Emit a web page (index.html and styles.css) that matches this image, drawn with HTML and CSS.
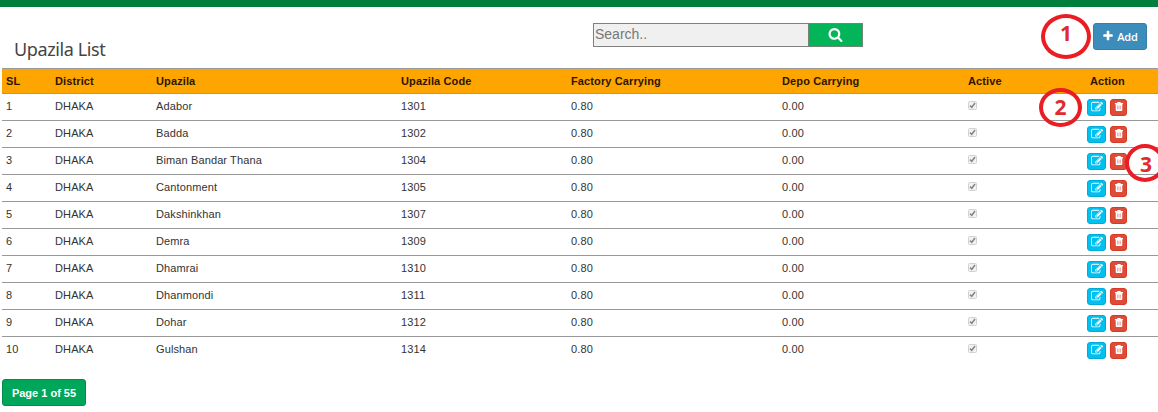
FILE: index.html
```html
<!DOCTYPE html>
<html lang="en">
<head>
<meta charset="utf-8">
<title>Upazila List</title>
<link rel="stylesheet" href="styles.css">
</head>
<body>
<svg class="sprite" aria-hidden="true">
  <symbol id="search" viewBox="0 0 1792 1792"><path d="M1216 832q0-185-131.5-316.5t-316.5-131.5-316.5 131.5-131.5 316.5 131.5 316.5 316.5 131.5 316.5-131.5 131.5-316.5zm512 832q0 52-38 90t-90 38q-54 0-90-38l-343-342q-179 124-399 124-143 0-273.5-55.5t-225-150-150-225-55.5-273.5 55.500-273.500 150-225 225-150 273.500-55.500 273.500 55.500 225 150 150 225 55.500 273.500q0 220-124 399l343 343q37 37 37 90z"/></symbol>
  <symbol id="plus" viewBox="0 0 1792 1792"><path d="M1600 736v192q0 40-28 68t-68 28h-416v416q0 40-28 68t-68 28h-192q-40 0-68-28t-28-68v-416h-416q-40 0-68-28t-28-68v-192q0-40 28-68t68-28h416v-416q0-40 28-68t68-28h192q40 0 68 28t28 68v416h416q40 0 68 28t28 68z"/></symbol>
  <symbol id="edit" viewBox="0 0 1792 1792"><path d="M888 1184l116-116-152-152-116 116v56h96v96h56zm440-720q-16-16-33 1l-350 350q-17 17-1 33t33-1l350-350q17-17 1-33zm80 594v190q0 119-84.5 203.5t-203.5 84.5h-832q-119 0-203.5-84.5t-84.5-203.5v-832q0-119 84.5-203.5t203.5-84.5h832q63 0 117 25 15 7 18 23 3 17-9 29l-49 49q-14 14-32 8-23-6-45-6h-832q-66 0-113 47t-47 113v832q0 66 47 113t113 47h832q66 0 113-47t47-113v-126q0-13 9-22l64-64q15-15 35-7t20 29zm-96-738l288 288-672 672h-288v-288zm444 132l-92 92-288-288 92-92q28-28 68-28t68 28l152 152q28 28 28 68t-28 68z"/></symbol>
  <symbol id="trash" viewBox="0 0 9 10"><path fill-rule="evenodd" d="M3 0h3l.7 1H9v1.400H0V1h2.300zM.8 2.400h7.400V9q0 1-1 1H1.800q-1 0-1-1zM2.900 4v4.500h.5V4zM4.250 4v4.500h.5V4zM5.600 4v4.500h.5V4z"/></symbol>
  <symbol id="check" viewBox="0 0 9 9"><rect x=".5" y=".5" width="8" height="8" rx="1" fill="#f1f1f1" stroke="#d2d2d2"/><path d="M2 4.600l1.800 1.700 3.200-4.300" fill="none" stroke="#858585" stroke-width="1.500"/></symbol>
</svg>
<div class="topbar"></div>
<header class="toolbar">
  <h1 class="title">Upazila List</h1>
  <form class="search">
    <input class="search-input" type="text" placeholder="Search..">
    <button class="search-button" type="button" aria-label="Search"><svg class="icon-search"><use href="#search"/></svg></button>
  </form>
  <button class="add" type="button"><svg class="icon-plus"><use href="#plus"/></svg>Add</button>
</header>
<main class="list">
  <div class="row head"><span>SL</span><span>District</span><span>Upazila</span><span>Upazila Code</span><span>Factory Carrying</span><span>Depo Carrying</span><span>Active</span><span class="action-title">Action</span></div>
  <div class="row"><span>1</span><span>DHAKA</span><span>Adabor</span><span>1301</span><span>0.80</span><span>0.00</span><svg class="check"><use href="#check"/></svg><div class="actions"><button class="edit"><svg><use href="#edit"/></svg></button><button class="delete"><svg><use href="#trash"/></svg></button></div></div>
  <div class="row"><span>2</span><span>DHAKA</span><span>Badda</span><span>1302</span><span>0.80</span><span>0.00</span><svg class="check"><use href="#check"/></svg><div class="actions"><button class="edit"><svg><use href="#edit"/></svg></button><button class="delete"><svg><use href="#trash"/></svg></button></div></div>
  <div class="row"><span>3</span><span>DHAKA</span><span>Biman Bandar Thana</span><span>1304</span><span>0.80</span><span>0.00</span><svg class="check"><use href="#check"/></svg><div class="actions"><button class="edit"><svg><use href="#edit"/></svg></button><button class="delete"><svg><use href="#trash"/></svg></button></div></div>
  <div class="row"><span>4</span><span>DHAKA</span><span>Cantonment</span><span>1305</span><span>0.80</span><span>0.00</span><svg class="check"><use href="#check"/></svg><div class="actions"><button class="edit"><svg><use href="#edit"/></svg></button><button class="delete"><svg><use href="#trash"/></svg></button></div></div>
  <div class="row"><span>5</span><span>DHAKA</span><span>Dakshinkhan</span><span>1307</span><span>0.80</span><span>0.00</span><svg class="check"><use href="#check"/></svg><div class="actions"><button class="edit"><svg><use href="#edit"/></svg></button><button class="delete"><svg><use href="#trash"/></svg></button></div></div>
  <div class="row"><span>6</span><span>DHAKA</span><span>Demra</span><span>1309</span><span>0.80</span><span>0.00</span><svg class="check"><use href="#check"/></svg><div class="actions"><button class="edit"><svg><use href="#edit"/></svg></button><button class="delete"><svg><use href="#trash"/></svg></button></div></div>
  <div class="row"><span>7</span><span>DHAKA</span><span>Dhamrai</span><span>1310</span><span>0.80</span><span>0.00</span><svg class="check"><use href="#check"/></svg><div class="actions"><button class="edit"><svg><use href="#edit"/></svg></button><button class="delete"><svg><use href="#trash"/></svg></button></div></div>
  <div class="row"><span>8</span><span>DHAKA</span><span>Dhanmondi</span><span>1311</span><span>0.80</span><span>0.00</span><svg class="check"><use href="#check"/></svg><div class="actions"><button class="edit"><svg><use href="#edit"/></svg></button><button class="delete"><svg><use href="#trash"/></svg></button></div></div>
  <div class="row"><span>9</span><span>DHAKA</span><span>Dohar</span><span>1312</span><span>0.80</span><span>0.00</span><svg class="check"><use href="#check"/></svg><div class="actions"><button class="edit"><svg><use href="#edit"/></svg></button><button class="delete"><svg><use href="#trash"/></svg></button></div></div>
  <div class="row"><span>10</span><span>DHAKA</span><span>Gulshan</span><span>1314</span><span>0.80</span><span>0.00</span><svg class="check"><use href="#check"/></svg><div class="actions"><button class="edit"><svg><use href="#edit"/></svg></button><button class="delete"><svg><use href="#trash"/></svg></button></div></div>
</main>
<button class="page" type="button">Page 1 of 55</button>
<div class="mark mark-one">1</div>
<div class="mark mark-two">2</div>
<div class="mark mark-three">3</div>
</body>
</html>
```
FILE: styles.css
```css
* { box-sizing: border-box; }
body {
  position: relative;
  margin: 0;
  height: 412px;
  overflow: hidden;
  background: #fff;
  color: #333;
  font: 11px/16px "Liberation Sans", Arial, sans-serif;
  letter-spacing: .12px;
}
button { padding: 0; font-family: inherit; letter-spacing: inherit; }
.sprite { display: none; }
.topbar { height: 7px; background: #00803c; }
.toolbar {
  display: grid;
  grid-template-columns: 579px 500px 54px;
  height: 61px;
  padding: 16px 0 0 14px;
}
.title {
  margin: 13px 0 0;
  font: 400 18px/26px "Noto Sans", sans-serif;
  letter-spacing: -.4px;
  color: #444;
}
.search { display: flex; width: 270px; height: 24px; }
.search-input {
  width: 215px;
  height: 24px;
  padding: 0 1px 2px;
  border: 1px solid #808080;
  border-right: 0;
  border-radius: 0;
  background: #f0f0f0;
  font: 14px/20px "Liberation Sans", Arial, sans-serif;
  letter-spacing: 0;
}
.search-input::placeholder { color: #777; }
.search-button {
  display: flex;
  align-items: center;
  justify-content: center;
  width: 55px;
  border: 1px solid #6f8578;
  background: #04b459;
  fill: #fff;
}
.icon-search { width: 15px; height: 15px; margin-bottom: 1px; }
.add {
  display: flex;
  align-items: center;
  justify-content: center;
  gap: 3px;
  height: 27px;
  border: 1px solid #367fa9;
  border-radius: 3px;
  background: #3c8dbc;
  color: #fff;
  fill: #fff;
  font: 600 11px/16px "Open Sans", sans-serif;
  letter-spacing: -.1px;
}
.icon-plus { width: 12px; height: 12px; margin-bottom: 1px; }
.list { margin-left: 2px; }
.row {
  display: grid;
  grid-template-columns: 49px 101px 245px 170px 211px 186px 119px 1fr;
  align-items: start;
  height: 27px;
  padding: 5px 0 0 4px;
  border-bottom: 1px solid #999;
  white-space: nowrap;
}
.row > span { margin-top: -1px; }
.row:last-child { border-bottom: 0; }
.head {
  height: 26px;
  border-top: 1px solid #999;
  background: #ffa500;
  color: #2d1500;
  font-weight: bold;
}
.action-title { padding-left: 3px; }
.check { width: 9px; height: 9px; margin-top: 2px; }
.actions { display: flex; gap: 4px; }
.edit, .delete {
  display: flex;
  align-items: center;
  justify-content: center;
  height: 17px;
  border: 1px solid #00acd6;
  border-radius: 3px;
  background: #00c0ef;
  fill: #fff;
}
.edit { width: 19px; }
.edit svg { width: 12px; height: 12px; margin-bottom: 1px; }
.delete { width: 17px; border-color: #d73925; background: #dd4b39; }
.delete svg { width: 8px; height: 9px; margin-bottom: 2px; }
.page {
  display: block;
  width: 84px;
  height: 27px;
  margin: 15px 0 0 2px;
  border: 1px solid #008d4c;
  border-radius: 3px;
  background: #00a65a;
  color: #fff;
  font: bold 11px/16px "Liberation Sans", Arial, sans-serif;
  letter-spacing: 0;
}
/* Numbered callouts over the page */
.mark {
  position: absolute;
  display: flex;
  align-items: center;
  justify-content: center;
  border: 4px solid #ea1c24;
  border-radius: 50%;
  color: #df2b30;
  font: bold 21px/22px "Open Sans", sans-serif;
  letter-spacing: 0;
}
.mark-one { left: 1041px; top: 14px; width: 50px; height: 45px; padding-bottom: 7px; }
.mark-two { left: 1039px; top: 88px; width: 43px; height: 39px; padding-bottom: 1px; }
.mark-three { left: 1125px; top: 144px; width: 40px; height: 38px; padding-top: 1px; padding-left: 2px; }
```
